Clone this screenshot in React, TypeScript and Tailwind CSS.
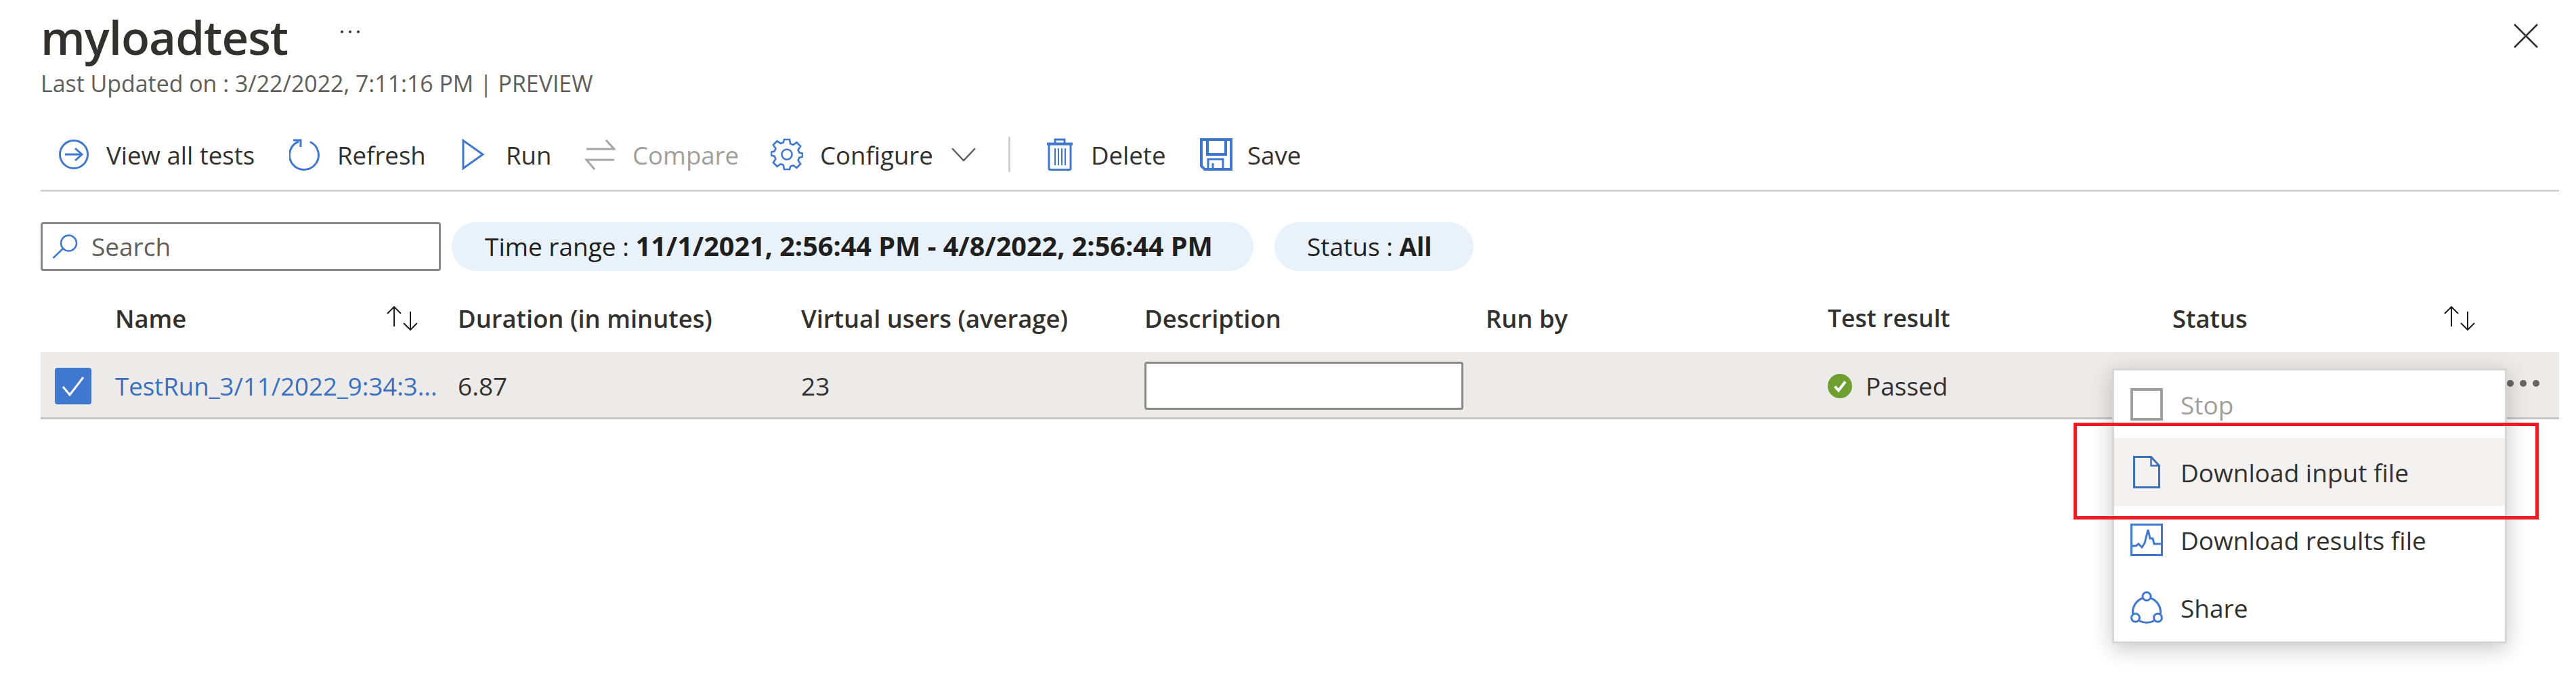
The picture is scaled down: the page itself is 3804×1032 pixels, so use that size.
import type { ReactNode } from "react";

const BLUE = "#4178cf";

// Icons
function ViewAllIcon() {
  return (
    <svg width="46" height="46" viewBox="0 0 46 46" fill="none" stroke={BLUE} strokeWidth="3">
      <circle cx="23" cy="23" r="20.5" />
      <path d="M10 23h25M25 14l10 9-10 9" />
    </svg>
  );
}

function RefreshIcon() {
  return (
    <svg width="48" height="48" viewBox="0 0 48 48" fill="none" stroke={BLUE} strokeWidth="3">
      <path d="M31 5.5A21.5 21.5 0 1 1 14 5" />
      <path d="M6 3h11v10" strokeWidth="3" />
    </svg>
  );
}

function RunIcon() {
  return (
    <svg width="34" height="48" viewBox="0 0 34 48" fill="none" stroke={BLUE} strokeWidth="3">
      <path d="M2 3.5 31 24 2 44.5Z" />
    </svg>
  );
}

function CompareIcon() {
  return (
    <svg width="46" height="48" viewBox="0 0 46 48" fill="none" stroke="#a6a6a6" strokeWidth="3">
      <path d="M3 16h41L32 3" />
      <path d="M44 32H3l12 14" />
    </svg>
  );
}

function GearIcon() {
  return (
    <svg width="48" height="48" viewBox="0 0 48 48" fill="none" stroke={BLUE} strokeWidth="2.6">
      <circle cx="24" cy="24" r="7.5" />
      <path d="M20 2h8l1.200 6.200 4 1.700 5.300-3.600 5.600 5.700-3.500 5.200 1.700 4.100 4.700 1.200v5l-4.700 1.200-1.700 4.100 3.500 5.200-5.600 5.700-5.300-3.600-4 1.700L28 46h-8l-1.200-6.200-4-1.700-5.300 3.600-5.600-5.700 3.500-5.200-1.700-4.100-4.700-1.200v-5l4.700-1.200 1.700-4.100-3.500-5.200 5.600-5.700 5.300 3.600 4-1.700Z" />
    </svg>
  );
}

function TrashIcon() {
  return (
    <svg width="40" height="48" viewBox="0 0 40 48" fill="none" stroke={BLUE} strokeWidth="3">
      <path d="M1 8.500h38" strokeWidth="4" />
      <path d="M13 7V2h14v5" />
      <path d="M4 9v35.500a2 2 0 0 0 2 2h28a2 2 0 0 0 2-2V9" />
      <path d="M13 15v25M18 15v25M23 15v25M28 15v25" strokeWidth="2" />
    </svg>
  );
}

function SaveIcon() {
  return (
    <svg width="48" height="48" viewBox="0 0 48 48" fill="none" stroke={BLUE}>
      <path d="M2 2h44v44H7l-5-5Z" strokeWidth="4" />
      <path d="M11 2v22h27V2" strokeWidth="4" />
      <path d="M12 46V31h22v15" strokeWidth="3" />
      <path d="M19 46v-9" strokeWidth="3" />
    </svg>
  );
}

function SearchIcon() {
  return (
    <svg width="38" height="36" viewBox="0 0 38 36" fill="none" stroke={BLUE} strokeWidth="2.500">
      <circle cx="24.500" cy="13" r="11.500" />
      <path d="M16 21 1.500 35" />
    </svg>
  );
}

function SortIcon() {
  return (
    <svg width="48" height="36" viewBox="0 0 48 36" fill="none" stroke="#201f1e" strokeWidth="2">
      <path d="M12 1v29M2 11 12 1l10 10" />
      <path d="M36 8v27M26 25l10 10 10-10" />
    </svg>
  );
}

function DocIcon() {
  return (
    <svg width="40" height="48" viewBox="0 0 40 48" fill="none" stroke="#3d6fba" strokeWidth="3">
      <path d="M1.500 1.500h25l12 13v32h-37Z" />
      <path d="M26.500 1.500v13h12" strokeWidth="2.500" />
    </svg>
  );
}

function ChartIcon() {
  return (
    <svg width="48" height="48" viewBox="0 0 48 48" fill="none" stroke={BLUE} strokeWidth="3">
      <rect x="1.500" y="1.500" width="45" height="45" />
      <path d="M3 33h5l4-3 5 5 4-6 5-20 3 13h4l2 8h10" />
    </svg>
  );
}

function ShareIcon() {
  return (
    <svg width="48" height="48" viewBox="0 0 48 48" fill="none" stroke={BLUE} strokeWidth="3">
      <circle cx="24" cy="7.500" r="6" />
      <circle cx="7.500" cy="39" r="6" />
      <circle cx="40.500" cy="39" r="6" />
      <path d="M18.500 10A22 22 0 0 0 3.500 33M29.500 10A22 22 0 0 1 44.500 33M13 43.500a24 24 0 0 0 22 0" />
    </svg>
  );
}

function ToolbarButton({
  width,
  gap,
  icon,
  label,
  disabled,
}: {
  width: string;
  gap: string;
  icon: ReactNode;
  label: string;
  disabled?: boolean;
}) {
  return (
    <div className={`flex shrink-0 items-center ${width} ${gap} ${disabled ? "text-[#a19f9d]" : "text-[#323130]"}`}>
      {icon}
      <span className="pt-[3px] text-[36.600px]">{label}</span>
    </div>
  );
}

function MenuItem({
  icon,
  label,
  active,
  disabled,
}: {
  icon: ReactNode;
  label: string;
  active?: boolean;
  disabled?: boolean;
}) {
  return (
    <div
      className={`flex h-[100px] items-center gap-[26px] pl-[24px] ${active ? "bg-[#f3f2f1] text-[#201f1e]" : ""} ${
        disabled ? "text-[#a19f9d]" : "text-[#323130]"
      }`}
    >
      <span className="flex size-[48px] items-center justify-center">{icon}</span>
      <span className="pt-[2px]">{label}</span>
    </div>
  );
}

export default function App() {
  return (
    <div
      className="relative h-[1032px] w-[3804px] overflow-hidden bg-white pl-[60px] pr-[25px] text-[37px] text-[#323130]"
      style={{ fontFamily: '"Open Sans", "Noto Sans", sans-serif' }}
    >
      {/* Title */}
      <div className="flex h-[106px] items-center justify-between pt-[14px] pb-[12px]">
        <div className="flex items-center">
          <h1 className="text-[69px] font-semibold leading-none tracking-[-1px]">myloadtest</h1>
          <span className="ml-[78px] mb-[14px] flex gap-[8px]">
            <i className="size-[4px] rounded-full bg-[#323130]" />
            <i className="size-[4px] rounded-full bg-[#323130]" />
            <i className="size-[4px] rounded-full bg-[#323130]" />
          </span>
        </div>
        <svg className="mr-[31px] mb-[2px]" width="36" height="36" viewBox="0 0 36 36" stroke="#323130" strokeWidth="2.500">
          <path d="M1 1l34 34M35 1 1 35" />
        </svg>
      </div>
      <div className="h-[34px] text-[33.900px] leading-[34px] text-[#605e5c]">
        Last Updated on : 3/22/2022, 7:11:16 PM | PREVIEW
      </div>

      {/* Toolbar */}
      <div className="flex h-[143px] items-center border-b-[3px] border-[#d2d2d2] pl-[26px] pt-[36px]">
        <ToolbarButton width="w-[341px]" gap="gap-[25px]" icon={<ViewAllIcon />} label="View all tests" />
        <ToolbarButton width="w-[255px]" gap="gap-[23px]" icon={<RefreshIcon />} label="Refresh" />
        <ToolbarButton width="w-[181px]" gap="gap-[31px]" icon={<RunIcon />} label="Run" />
        <ToolbarButton width="w-[275px]" gap="gap-[25px]" icon={<CompareIcon />} label="Compare" disabled />
        <ToolbarButton width="w-[267px]" gap="gap-[25px]" icon={<GearIcon />} label="Configure" />
        <svg width="36" height="20" viewBox="0 0 36 20" fill="none" stroke="#605e5c" strokeWidth="2.500" className="mr-[48px]">
          <path d="M1 1l17 18L35 1" />
        </svg>
        <div className="h-[52px] w-[3px] bg-[#d2d0ce]" />
        <ToolbarButton width="ml-[53px] w-[227px]" gap="gap-[26px]" icon={<TrashIcon />} label="Delete" />
        <ToolbarButton width="w-[200px]" gap="gap-[22px]" icon={<SaveIcon />} label="Save" />
      </div>

      {/* Filters */}
      <div className="mt-[45px] flex h-[72px] items-center">
        <div className="flex h-full w-[591px] items-center gap-[20px] rounded-[4px] border-[3px] border-[#8a8886] pl-[14px] text-[#605e5c]">
          <SearchIcon />
          <span>Search</span>
        </div>
        <div className="ml-[16px] flex h-full w-[1184px] items-center rounded-full bg-[#e9f1fa] pl-[49px] text-[#201f1e]">
          <span>
            Time range : <b className="text-[39.600px] font-bold">11/1/2021, 2:56:44 PM - 4/8/2022, 2:56:44 PM</b>
          </span>
        </div>
        <div className="ml-[31px] flex h-full w-[294px] items-center rounded-full bg-[#e9f1fa] pl-[48px] text-[#201f1e]">
          <span>
            Status : <b className="font-bold">All</b>
          </span>
        </div>
      </div>

      {/* Table header */}
      <div className="grid h-[120px] grid-cols-[110px_506px_507px_507px_504px_505px_509px_1fr] items-center pt-[20px] text-[36.400px] font-semibold">
        <div />
        <div className="flex items-center">
          <span className="w-[400px]">Name</span>
          <SortIcon />
        </div>
        <div>Duration (in minutes)</div>
        <div>Virtual users (average)</div>
        <div>Description</div>
        <div>Run by</div>
        <div className="text-[35.500px]">Test result</div>
        <div className="flex items-center">
          <span className="w-[400px]">Status</span>
          <SortIcon />
        </div>
      </div>

      {/* Table row */}
      <div className="grid h-[99px] grid-cols-[110px_506px_507px_507px_504px_505px_509px_1fr] items-center border-b-[3px] border-[#c8c6c4] bg-[#ecebe9]">
        <div className="flex pl-[21px] pt-[4px]">
          <span className="flex h-[54px] w-[54px] items-center justify-center rounded-[4px] bg-[#4178cf]">
            <svg width="34" height="30" viewBox="0 0 34 30" fill="none" stroke="#fff" strokeWidth="3">
              <path d="M2 16l10 12L32 2" />
            </svg>
          </span>
        </div>
        <div className="pt-[4px] text-[36.600px] text-[#3b6fbf]">TestRun_3/11/2022_9:34:3...</div>
        <div className="pt-[4px]">6.87</div>
        <div className="pt-[4px]">23</div>
        <div className="pt-[3px]">
          <div className="h-[71px] w-[471px] rounded-[4px] border-[3px] border-[#8a8886] bg-white" />
        </div>
        <div />
        <div className="flex items-center gap-[20px] pt-[4px]">
          <svg width="36" height="36" viewBox="0 0 36 36">
            <circle cx="18" cy="18" r="18" fill="#6f9f30" />
            <path d="M10.500 18.500l5.500 6 10-13" fill="none" stroke="#fff" strokeWidth="4" />
          </svg>
          <span>Passed</span>
        </div>
        <div className="flex justify-end gap-[9px] pb-[4px] pr-[29px]">
          <i className="size-[10px] rounded-full bg-[#666]" />
          <i className="size-[10px] rounded-full bg-[#666]" />
          <i className="size-[10px] rounded-full bg-[#666]" />
        </div>
      </div>

      {/* Context menu */}
      <div className="absolute left-[3119px] top-[544px] w-[583px] border-[3px] border-[#d6d6d6] bg-white shadow-[0_8px_30px_rgba(0,0,0,0.22)]">
        <MenuItem
          disabled
          label="Stop"
          icon={<span className="block size-[48px] border-[4px] border-[#a19f9d]" />}
        />
        <MenuItem active label="Download input file" icon={<DocIcon />} />
        <MenuItem label="Download results file" icon={<ChartIcon />} />
        <MenuItem label="Share" icon={<ShareIcon />} />
      </div>

      {/* Red annotation */}
      <div className="absolute left-[3062px] top-[624px] h-[143px] w-[687px] border-[5px] border-[#ed1c24]" />
    </div>
  );
}
